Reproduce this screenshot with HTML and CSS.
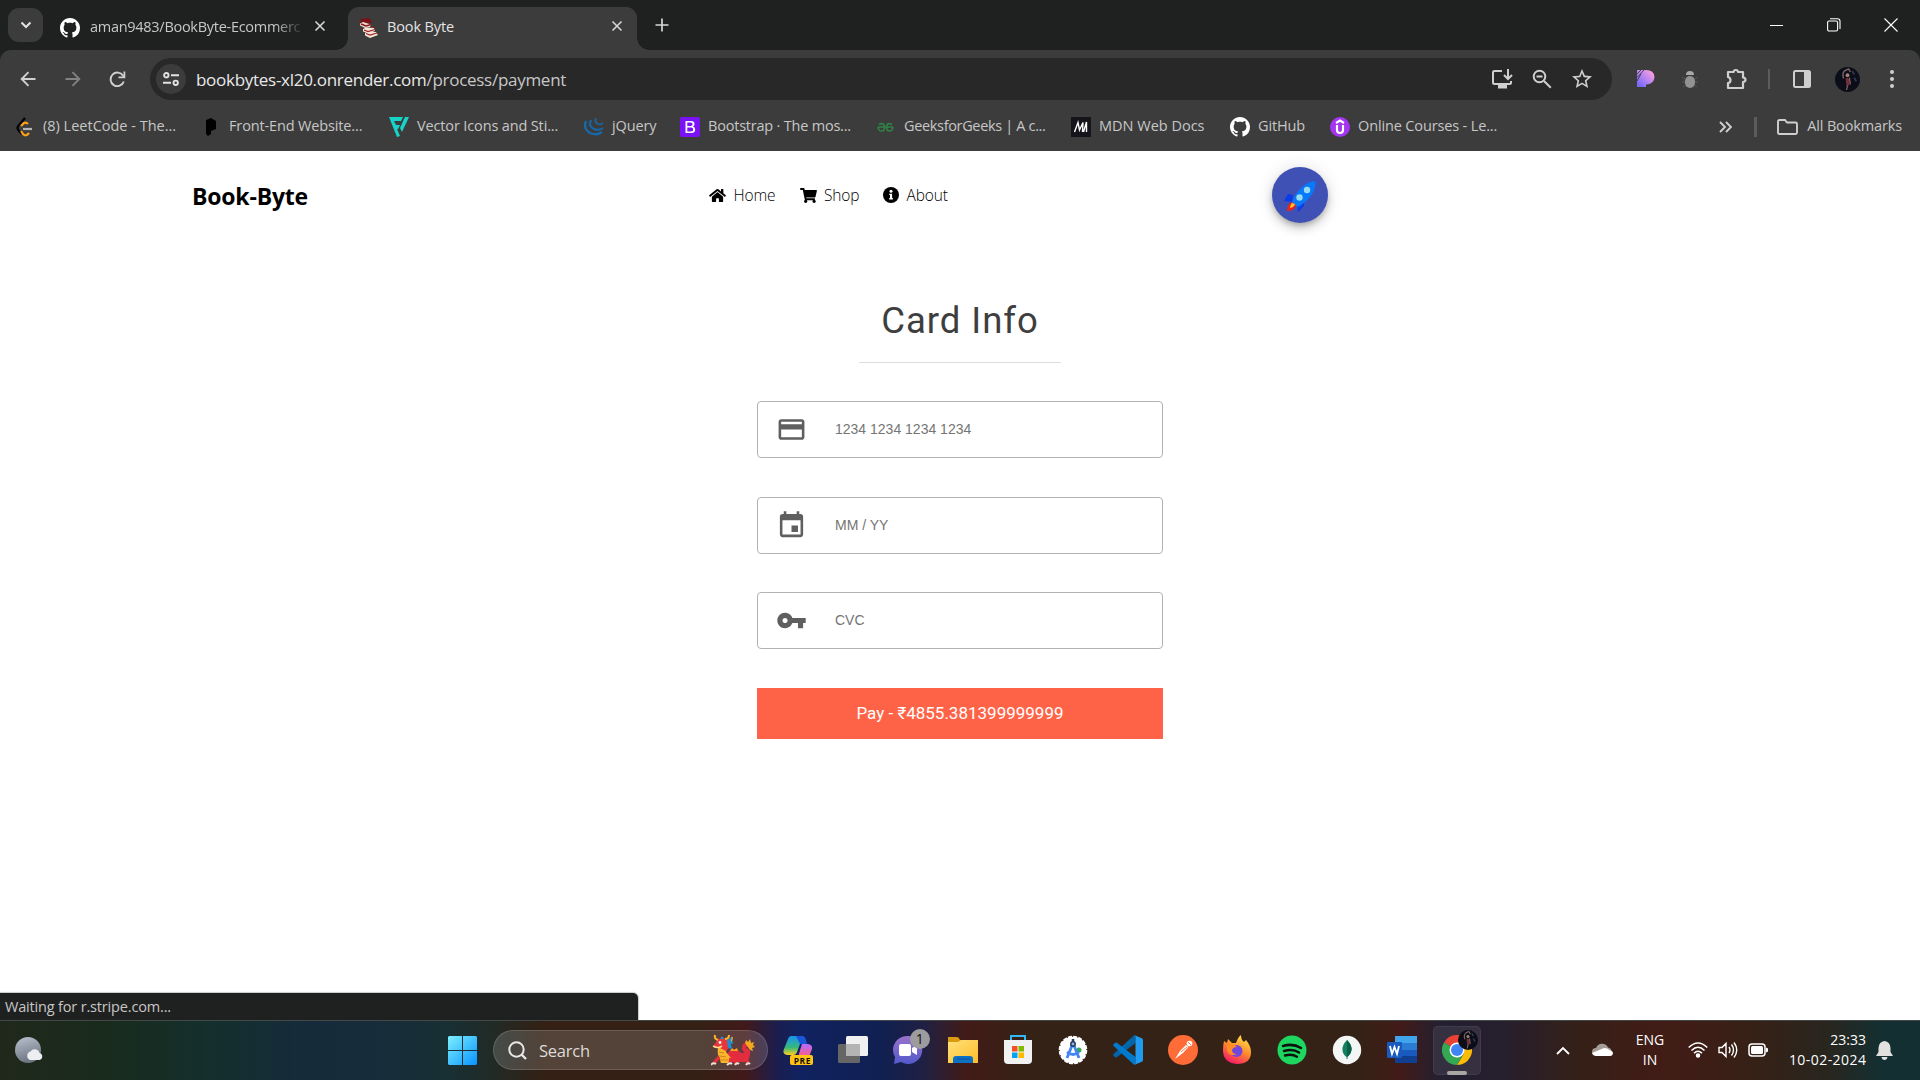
FILE: index.html
```html
<!DOCTYPE html>
<html lang="en">
<head>
<meta charset="utf-8">
<title>Book Byte</title>
<link rel="stylesheet" href="styles.css">
</head>
<body>
<svg class="defs" aria-hidden="true">
  <symbol id="github" viewBox="0 0 16 16"><path d="M8 0C3.58 0 0 3.58 0 8c0 3.54 2.29 6.53 5.47 7.59.4.07.55-.17.55-.38 0-.19-.01-.82-.01-1.49-2.01.37-2.53-.49-2.69-.94-.09-.23-.48-.94-.82-1.13-.28-.15-.68-.52-.01-.53.63-.01 1.08.58 1.23.82.72 1.21 1.87.87 2.33.66.07-.52.28-.87.51-1.07-1.78-.2-3.64-.89-3.64-3.95 0-.87.31-1.59.82-2.15-.08-.2-.36-1.02.08-2.12 0 0 .67-.21 2.2.82.64-.18 1.32-.27 2-.27s1.36.09 2 .27c1.53-1.04 2.2-.82 2.2-.82.44 1.1.16 1.92.08 2.12.51.56.82 1.27.82 2.15 0 3.07-1.87 3.75-3.65 3.95.29.25.54.73.54 1.48 0 1.07-.01 1.93-.01 2.2 0 .21.15.46.55.38A8.01 8.01 0 0 0 16 8c0-4.42-3.58-8-8-8z" fill="#fff"/></symbol>
  <symbol id="close" viewBox="0 0 12 12"><path d="M1.500 1.500l9 9M10.500 1.500l-9 9" stroke="#d6d6d6" stroke-width="1.600"/></symbol>
  <symbol id="avatar" viewBox="0 0 26 26"><circle cx="13" cy="13" r="13" fill="#0b0d18"/><path d="M9 12Q7 7 10 4l4-2 2 3" fill="none" stroke="#7b6560" stroke-width="1.500"/><circle cx="13" cy="8.500" r="2" fill="#a58379"/><path d="M11 12l2-1 2 2v6l-3 1z" fill="#742d3a"/><path d="M13 19l-1 5M15 11l1 7" stroke="#8d6a64" stroke-width="1.200"/><path d="M18 4l2 4M20 11l2 4" stroke="#30364c" stroke-width="2"/></symbol>
</svg>

<header class="browser">
  <div class="tabstrip">
    <button class="tab-search"><svg width="12" height="8" viewBox="0 0 12 8"><path d="M1.500 1.500L6 6l4.500-4.500" fill="none" stroke="#e3e3e3" stroke-width="2"/></svg></button>
    <div class="tab">
      <svg class="ico20"><use href="#github"/></svg>
      <span class="tab-title fade">aman9483/BookByte-Ecommerc</span>
      <svg class="close"><use href="#close"/></svg>
    </div>
    <div class="tab active">
      <svg class="ico20" viewBox="0 0 20 20"><path d="M2 1l8-1 3 4-6 3-6-2z" fill="#7d1118"/><path d="M1 5.500l3-1.500 8 2.500-1 2.500-5 1-5-2.500z" fill="#e9ddc9"/><path d="M2 6l5 2 5-1.500M4 10.500l5 1 6-2.500" fill="none" stroke="#8c1920" stroke-width="1.400"/><path d="M4 11l3-1.500 8 .5 1 3-7 2.500-5-2z" fill="#f0e6d4"/><path d="M5 12l4 1.500 7-2" fill="none" stroke="#a5202a" stroke-width="1.300"/><path d="M6 15l5-1 6 0 2 3-8 3-5-2.500z" fill="#f0e6d4"/><path d="M7 15.500l4 1.500 7-2" fill="none" stroke="#a5202a" stroke-width="1.300"/></svg>
      <span class="tab-title">Book Byte</span>
      <svg class="close"><use href="#close"/></svg>
    </div>
    <button class="new-tab"><svg width="14" height="14" viewBox="0 0 14 14"><path d="M7 .5v13M.5 7h13" stroke="#d6d6d6" stroke-width="1.700"/></svg></button>
    <div class="win-controls">
      <svg width="14" height="14" viewBox="0 0 14 14"><path d="M0 7.500h13" stroke="#fff"/></svg>
      <svg width="14" height="14" viewBox="0 0 14 14"><rect x=".6" y="3" width="10" height="10" rx="1.500" fill="none" stroke="#fff" stroke-width="1.100"/><path d="M3 .7h7.500q2.500 0 2.500 2.500V11" fill="none" stroke="#fff" stroke-width="1.100"/></svg>
      <svg width="14" height="14" viewBox="0 0 14 14"><path d="M.5 .5l13 13M13.500 .5l-13 13" stroke="#fff" stroke-width="1.100"/></svg>
    </div>
  </div>

  <div class="toolbar">
    <div class="nav">
      <svg width="16" height="16" viewBox="0 0 16 16"><path d="M15.500 8H2M8.500 1.200L1.700 8l6.800 6.800" fill="none" stroke="#d0d0d0" stroke-width="1.900"/></svg>
      <svg width="16" height="16" viewBox="0 0 16 16"><path d="M.5 8H14M7.500 1.200L14.300 8l-6.800 6.800" fill="none" stroke="#828282" stroke-width="1.900"/></svg>
      <svg width="17" height="17" viewBox="0 0 17 17"><path d="M14.800 10.500a6.800 6.800 0 1 1-.7-5.800L15 6" fill="none" stroke="#d0d0d0" stroke-width="1.900"/><path d="M16.300 .5v6.800H9.500V5.500h5V.5z" fill="#d0d0d0"/></svg>
    </div>
    <div class="omnibox">
      <span class="site-info"><svg width="16" height="14" viewBox="0 0 16 14" fill="none" stroke="#e3e3e3" stroke-width="1.900"><circle cx="3.300" cy="3.200" r="2.200"/><path d="M8 3.200h8M0 10.800h8"/><circle cx="12.700" cy="10.800" r="2.200"/></svg></span>
      <span class="url"><span class="host">bookbytes-xl20.onrender.com</span><span class="path">/process/payment</span></span>
      <div class="omni-icons">
        <svg width="22" height="20" viewBox="0 0 22 20" fill="none" stroke="#cfcfcf" stroke-width="2"><path d="M11 2H3.500Q2 2 2 3.500v10Q2 15 3.500 15h15q1.500 0 1.500-1.500V12"/><path d="M8 16.500h7v2H8z" fill="#cfcfcf"/><path d="M17 0v9M13 6l4 4 4-4"/></svg>
        <svg width="20" height="20" viewBox="0 0 20 20" fill="none" stroke="#cfcfcf" stroke-width="2"><circle cx="7.500" cy="7.500" r="5.800"/><path d="M12 12l6.800 6.800M4.500 7.500h6"/></svg>
        <svg width="24" height="24" viewBox="0 0 24 24"><path fill="#cfcfcf" d="M22 9.240l-7.190-.62L12 2 9.190 8.630 2 9.240l5.460 4.730L5.820 21 12 17.270 18.180 21l-1.630-7.030L22 9.240zM12 15.400l-3.760 2.270 1-4.280-3.320-2.880 4.380-.38L12 6.100l1.710 4.040 4.380.38-3.320 2.880 1 4.280L12 15.400z"/></svg>
      </div>
    </div>
    <div class="ext">
      <svg width="18" height="20" viewBox="0 0 18 20"><defs><linearGradient id="pg" x1="0" y1="1" x2="1" y2="0"><stop offset=".1" stop-color="#7568ff"/><stop offset=".9" stop-color="#ffa0e0"/></linearGradient></defs><path d="M0 1h9q8 0 8.500 7-.5 7-7.500 7.500H9V18H0z" fill="url(#pg)"/><path d="M0 5l5-5M0 8.500L8 0M0 12L4 5" stroke="#3c3c3c" stroke-width=".9"/></svg>
      <svg width="16" height="20" viewBox="0 0 16 20"><path d="M4 6a4 4 0 0 1 8 0z" fill="#a9a9a9"/><rect x="3" y="7" width="10" height="12" rx="5" fill="#929292"/><path d="M0 8l3 2M16 8l-3 2M0 13h3M13 13h3M1 18l3-2M15 18l-3-2" stroke="#565656"/></svg>
      <svg width="22" height="22" viewBox="0 0 22 22"><path d="M2 4h5.500q.3-2 2.300-2T12 4h5v5.500q2.500.3 2.500 2.300T17 14v6H2v-5q2.500-.3 2.500-2.800T2 9z" fill="none" stroke="#cfcfcf" stroke-width="2.200" stroke-linejoin="round"/></svg>
      <i class="vline"></i>
      <svg width="18" height="18" viewBox="0 0 18 18"><rect x="1" y="1" width="16" height="16" rx="1.500" fill="none" stroke="#cfcfcf" stroke-width="2"/><path d="M11 1h6v16h-6z" fill="#cfcfcf"/></svg>
      <svg width="25" height="25"><use href="#avatar"/></svg>
      <svg width="4" height="18" viewBox="0 0 4 18" fill="#cfcfcf"><circle cx="2" cy="2" r="2"/><circle cx="2" cy="9" r="2"/><circle cx="2" cy="16" r="2"/></svg>
    </div>
  </div>

  <div class="bookmarks">
    <div class="marks">
      <a><svg viewBox="0 0 20 20" fill="none" stroke-width="2.200"><path d="M10 1L4 8q-3 3 0 6l3 3" stroke="#000"/><path d="M6 9l3-3q2-1 4 1M6 14l2 3q3 3 6-1" stroke="#ffa116"/><path d="M8 12h9" stroke="#b3b3b3"/></svg><span>(8) LeetCode - The...</span></a>
      <a><svg viewBox="0 0 20 20"><path d="M5 3l5-2 5 3v8l-5 2v3l-3 2-2-2z" fill="#000"/></svg><span>Front-End Website...</span></a>
      <a><svg viewBox="0 0 20 20"><path d="M0 0h14l-2 4H5l2 4h4l-2 4H8l3 7-3 1z" fill="#16d5c8"/><path d="M16 0h4l-7 15-2-4z" fill="#16d5c8"/></svg><span>Vector Icons and Sti...</span></a>
      <a><svg viewBox="0 0 20 20" fill="none" stroke="#1768a9"><path d="M2 4q-3 8 4 12 7 3 12-1" stroke-width="2.400"/><path d="M7 3q-3 6 3 9 5 2 9-1" stroke-width="2"/><path d="M12 1q-2 4 2 6 3 1 5-1" stroke-width="1.600"/></svg><span>jQuery</span></a>
      <a><svg viewBox="0 0 20 20"><rect width="20" height="20" rx="2" fill="#7a12f8"/><path d="M5.500 4h5.500q3.500 0 3.500 3 0 1.700-1.500 2.500 2.200.6 2.200 3 0 3.500-4 3.500H5.500zM7.300 5.600v3.300h3.300q2 0 2-1.700t-2-1.600zM7.300 10.500v3.900h3.500q2.500 0 2.500-2t-2.500-1.900z" fill="#fff" fill-rule="evenodd"/></svg><span>Bootstrap · The mos...</span></a>
      <a><svg viewBox="0 0 20 20" fill="none" stroke="#2f8045" stroke-width="1.700"><path d="M2 10h15M3 7.500q5-2.500 5.500 2.500 0 4-3 4T2 10M16 7.500q-5-2.500-5.500 2.500 0 4 3 4T17 10"/></svg><span>GeeksforGeeks | A c...</span></a>
      <a><svg viewBox="0 0 20 20"><path d="M0 0h20v20H0z" fill="#15141a"/><path d="M3.500 15L7 5.500 8.500 13 12 5.500 11.500 15M12.500 15L15.500 5v10" fill="none" stroke="#fff" stroke-width="1.400"/></svg><span>MDN Web Docs</span></a>
      <a><svg viewBox="0 0 20 20"><use href="#github"/></svg><span>GitHub</span></a>
      <a><svg viewBox="0 0 20 20"><circle cx="10" cy="10" r="10" fill="#a435f0"/><path d="M6 6l4-2.500L14 6M7 8v5q0 3 3 3t3-3V8" fill="none" stroke="#fff" stroke-width="2.200"/></svg><span>Online Courses - Le...</span></a>
    </div>
    <div class="marks-end">
      <svg width="13" height="12" viewBox="0 0 13 12"><path d="M1 1l5 5-5 5M7 1l5 5-5 5" fill="none" stroke="#cfcfcf" stroke-width="1.900"/></svg>
      <i class="vline thick"></i>
      <svg width="21" height="16" viewBox="0 0 21 16"><path d="M1 2.500Q1 1 2.500 1H8l2 2.500h8.500Q20 3.500 20 5v8.500q0 1.500-1.500 1.500h-16Q1 15 1 13.500z" fill="none" stroke="#cfcfcf" stroke-width="1.900"/></svg>
      <span>All Bookmarks</span>
    </div>
  </div>
</header>

<main class="page">
  <nav class="site-nav">
    <h1 class="brand">Book-Byte</h1>
    <div class="links">
      <a><svg width="17" height="15" viewBox="0 0 576 512"><path d="M280.400 148.300L96 300.100V464a16 16 0 0 0 16 16l112-.3a16 16 0 0 0 16-16V368a16 16 0 0 1 16-16h64a16 16 0 0 1 16 16v95.600a16 16 0 0 0 16 16l112 .4a16 16 0 0 0 16-16V300L295.700 148.300a12.200 12.200 0 0 0-15.300 0zM571.600 251.500L488 182.600V44.100a12 12 0 0 0-12-12h-56a12 12 0 0 0-12 12v72.600L318.500 43a48 48 0 0 0-61 0L4.300 251.500a12 12 0 0 0-1.600 16.900l25.500 31a12 12 0 0 0 16.900 1.600L280.400 107.200a12.200 12.200 0 0 1 15.300 0L531 301a12 12 0 0 0 16.900-1.600l25.500-31a12 12 0 0 0-1.800-16.900z"/></svg><span>Home</span></a>
      <a><svg width="17" height="15" viewBox="0 0 576 512"><path d="M528.100 301.300l47.300-208C578.800 78.300 567.400 64 552 64H159.200l-9.200-44.800C147.800 8 137.900 0 126.500 0H24C10.700 0 0 10.700 0 24v16c0 13.300 10.700 24 24 24h69.900l70.200 343.400C147.300 417.100 136 435.200 136 456c0 30.900 25.100 56 56 56s56-25.100 56-56c0-15.700-6.400-29.800-16.800-40h209.600C430.400 426.200 424 440.300 424 456c0 30.900 25.100 56 56 56s56-25.100 56-56c0-22.200-12.900-41.300-31.600-50.400l5.500-24.300c3.400-15-8-29.300-23.400-29.300H218.100l-6.500-32h293.100c11.200 0 20.900-7.800 23.400-18.700z"/></svg><span>Shop</span></a>
      <a><svg width="16" height="16" viewBox="0 0 16 16"><circle cx="8" cy="8" r="8"/><circle cx="8" cy="4.300" r="1.500" fill="#fff"/><path d="M6.200 6.700h2.900v4.400h.8v1.400H6.200v-1.400H7V8.100h-.8z" fill="#fff"/></svg><span>About</span></a>
    </div>
    <div class="fab">
      <svg width="36" height="36" viewBox="0 0 36 36"><path d="M11 18l-5-1-4 7 8 1zM17 25l5-2 0 6-6 6-1-8z" fill="#0a3cea"/><path d="M10 25Q17 8 31 4q3 0 2.500 4-2 12-15.500 21-3 1.500-6-.5-2.500-1.500-2-3.500z" fill="#0879fb"/><path d="M10 25q-5 2-5 9 8 0 9-6z" fill="#e52620"/><path d="M10 26q-2 2-2 5 4-1 5-4z" fill="#ffc52f"/><circle cx="25" cy="13" r="3.200" fill="#97dbed"/><circle cx="17.500" cy="20.500" r="3.200" fill="#97dbed"/></svg>
    </div>
  </nav>

  <form class="pay">
    <h2>Card Info</h2>
    <div class="field"><svg viewBox="0 0 24 24"><path d="M20 4H4c-1.110 0-1.990.89-1.990 2L2 18c0 1.110.89 2 2 2h16c1.110 0 2-.89 2-2V6c0-1.110-.89-2-2-2zm0 14H4v-6h16v6zm0-10H4V6h16v2z"/></svg><span>1234 1234 1234 1234</span></div>
    <div class="field"><svg viewBox="0 0 24 24"><path d="M17 12h-5v5h5v-5zM16 1v2H8V1H6v2H5c-1.110 0-1.990.9-1.990 2L3 19c0 1.100.89 2 2 2h14c1.100 0 2-.9 2-2V5c0-1.100-.9-2-2-2h-1V1h-2zm3 18H5V8h14v11z"/></svg><span>MM / YY</span></div>
    <div class="field"><svg viewBox="0 0 24 24"><path d="M12.650 10C11.830 7.670 9.610 6 7 6c-3.310 0-6 2.690-6 6s2.690 6 6 6c2.610 0 4.830-1.670 5.650-4H17v4h4v-4h2v-4H12.650zM7 14c-1.100 0-2-.9-2-2s.9-2 2-2 2 .9 2 2-.9 2-2 2z"/></svg><span>CVC</span></div>
    <button type="button" class="submit">Pay - ₹4855.381399999999</button>
  </form>
  <div class="status">Waiting for r.stripe.com...</div>
</main>

<footer class="taskbar">
  <div class="weather"><svg width="29" height="27" viewBox="0 0 29 27"><defs><linearGradient id="mo" x2=".3" y2="1"><stop stop-color="#b9c2cf"/><stop offset="1" stop-color="#6e7783"/></linearGradient></defs><circle cx="13" cy="13" r="13" fill="url(#mo)"/><path d="M15 23a4.500 4.500 0 0 1 .5-8.500 5 5 0 0 1 9 1.500 3.600 3.600 0 0 1 0 7z" fill="#eceef2"/></svg></div>
  <div class="apps">
    <div class="app start"><svg width="29" height="29" viewBox="0 0 29 29"><defs><linearGradient id="wi" x2="1" y2="1"><stop stop-color="#7df0ff"/><stop offset="1" stop-color="#0893ff"/></linearGradient></defs><path d="M1 0h13v14H0V1zM15 0h13l1 1v13H15zM0 15h14v14H1l-1-1zM15 15h14v13l-1 1H15z" fill="url(#wi)"/></svg></div>
    <div class="search">
      <svg width="19" height="19" viewBox="0 0 19 19"><circle cx="8.500" cy="8.500" r="7.200" fill="none" stroke="#e8e8e8" stroke-width="2"/><path d="M13.500 13.500l4.500 4.500" stroke="#e8e8e8" stroke-width="2.400"/></svg>
      <span>Search</span>
      <svg class="dragon" width="44" height="32" viewBox="0 0 44 32"><path d="M16 20q6-8 12-3 4 4 5 1-4-3-1-8 4-3 7 0l-1 3q-3-1-3 1 5 1 4 7-1 8-8 7H16z" fill="#e22c40"/><path d="M34 9l1-3 2 2 2-3 1 4 3-1-1 3 2 2-3 1 1 3-3-1M19 17l2-3 2 2 3-2 1 3" fill="#f6a71c"/><path d="M7 14q-1 6 1 9l2 6h9l1-5-5-6 1-6z" fill="#f9b52c"/><path d="M8 18l5 1M8 22l7 1M9 26l8 0" stroke="#d98218"/><path d="M3 11l4-6 7-1 4 4 1 5-4 4-6-3-6 0z" fill="#e6353b"/><path d="M7 6Q3 5 4 1M14 5q4 0 4-4M20 8l1-5" fill="none" stroke="#ffb526" stroke-width="2"/><path d="M16 6l5-3-1 4 3 2-3 1 1 5-4-1zM9 5l2-3 2 3z" fill="#208dce"/><circle cx="9" cy="8.500" r="1.400" fill="#fff"/><path d="M2 12q5 3 9 0" fill="none" stroke="#ffd88a" stroke-width="1.600"/><path d="M8 23l-5 6M24 22l1 8M20 24l-1 6M34 23l3 6" stroke="#e72d3b" stroke-width="3.500"/><path d="M0 31q2-3 5-1M16 31q3-3 5-1M24 31q2-3 4-1M35 31q2-3 4-1" stroke="#eee3d8" stroke-width="2" fill="none"/></svg>
    </div>
    <div class="app"><svg width="30" height="30" viewBox="0 0 30 30"><defs><linearGradient id="c1" x2="0" y2="1"><stop stop-color="#1794f0"/><stop offset=".6" stop-color="#35b97c"/><stop offset="1" stop-color="#ffd21c"/></linearGradient><linearGradient id="c2" x2="0" y2="1"><stop stop-color="#b66aff"/><stop offset="1" stop-color="#ff5c7d"/></linearGradient></defs><path d="M8 1h12l-6 16q-1 3-4 3H4q-5-1-3-6L5 4q1-3 3-3z" fill="url(#c1)"/><path d="M13 1h6q3 0 4 4l1 4h-7z" fill="#1b55d9"/><path d="M19 9h6q5 1 4 5l-3 8H15z" fill="url(#c2)"/><rect x="7" y="20" width="23" height="10" rx="2" fill="#ffc414"/></svg><b class="pre">PRE</b></div>
    <div class="app"><svg width="30" height="28" viewBox="0 0 30 28"><rect y="8" width="22" height="19" rx="1.500" fill="#666"/><rect x="8" width="22" height="20" rx="1.500" fill="#f1f1f1"/><path d="M8 8h14v12H8z" fill="#b4b4b4"/></svg></div>
    <div class="app"><svg width="30" height="30" viewBox="0 0 30 30"><defs><linearGradient id="ch" x2="0" y2="1"><stop stop-color="#9a72cb"/><stop offset="1" stop-color="#5159cb"/></linearGradient></defs><path d="M15 1a14 14 0 1 1-7 26l-7 2 1-7A14 14 0 0 1 15 1z" fill="url(#ch)"/><rect x="6" y="9" width="12" height="12" rx="2" fill="#fff"/><path d="M19 13l5-3v10l-5-3z" fill="#fff"/></svg><b class="count">1</b></div>
    <div class="app"><svg width="30" height="28" viewBox="0 0 30 28"><defs><linearGradient id="fo" x2="1" y2="1"><stop stop-color="#ffe17b"/><stop offset="1" stop-color="#ffbd29"/></linearGradient></defs><path d="M0 8V1h9q2 0 3 3h5v4z" fill="#d99b11"/><path d="M0 6h10l3-2h17v23H0z" fill="url(#fo)"/><path d="M5 27v-4q0-3 3-3h14q3 0 3 3v4z" fill="#0e70c5"/><path d="M9 23h13" stroke="#084e91"/></svg></div>
    <div class="app"><svg width="30" height="30" viewBox="0 0 30 30"><path d="M8 7V1h14v6" fill="none" stroke="#2fb8f4" stroke-width="2"/><path d="M1 5h28v20q0 4-4 4H5q-4 0-4-4z" fill="#f1f1f1"/><path d="M9 11h5.500v5.500H9z" fill="#f25022"/><path d="M15.500 11H21v5.500h-5.500z" fill="#7fba00"/><path d="M9 17.500h5.500V23H9z" fill="#00a4ef"/><path d="M15.500 17.500H21V23h-5.500z" fill="#ffb900"/></svg></div>
    <div class="app"><svg width="30" height="30" viewBox="0 0 30 30"><circle cx="15" cy="15" r="13.300" fill="#fff" stroke="#fff" stroke-width="2" stroke-dasharray="4 1.200"/><circle cx="21" cy="15" r="2.500" fill="#34a853"/><path d="M15 8L9 23M15 8l6 15M9 17q6 5 12 0" fill="none" stroke="#4285f4" stroke-width="2.800"/><circle cx="15" cy="9" r="2.200" fill="#8fb4e8" stroke="#233b59" stroke-width="1.500"/><path d="M15 4v3" stroke="#233b59" stroke-width="2.500"/></svg></div>
    <div class="app"><svg width="30" height="30" viewBox="0 0 100 100"><path d="M75 27L13 74q-3 2-5 0l-6-5q-3-3 0-6L70 1l5 2z" fill="#0065a9"/><path d="M75 73L13 26q-3-2-5 0l-6 5q-3 3 0 6l68 62 5-2z" fill="#007acc"/><path d="M70 0l26 11q4 2 4 6v66q0 4-4 6L70 100q4-2 5-6V6q-1-4-5-6z" fill="#1f9cf0"/></svg></div>
    <div class="app"><svg width="30" height="30" viewBox="0 0 30 30"><circle cx="15" cy="15" r="15" fill="#ff6c37"/><path d="M7 24l5-8 6-6 2.500 2-5.500 6z" fill="#fff"/><circle cx="21.500" cy="8.500" r="2.800" fill="#fff"/><path d="M13 17l6-5M20 7l3 3" stroke="#ff6c37" stroke-width=".9"/></svg></div>
    <div class="app"><svg width="30" height="30" viewBox="0 0 30 30"><defs><linearGradient id="ff" x1=".8" y1="0" x2=".3" y2="1"><stop stop-color="#ffe94c"/><stop offset=".5" stop-color="#ff8a2b"/><stop offset="1" stop-color="#f5156c"/></linearGradient></defs><path d="M2 6l3 2 1-4 4 4h4q2-6 5-8 0 5 3 7l2-2q5 6 5 12 0 12-14 12Q1 28 1 15q0-5 1-9z" fill="url(#ff)"/><circle cx="14.500" cy="16" r="6" fill="#7146df"/><path d="M5 10q7-2 10 2-4 0-5 3 0 4 5 4-8 3-10-4z" fill="#ff8d24"/></svg></div>
    <div class="app"><svg width="30" height="30" viewBox="0 0 30 30"><circle cx="15" cy="15" r="14.500" fill="#1ed760"/><path d="M6 11q10-3 18 2M7 16q9-2.500 15 1.500M8 20.500q7-2 12 1.200" fill="none" stroke="#0b130c" stroke-width="2.500" stroke-linecap="round"/></svg></div>
    <div class="app"><svg width="30" height="30" viewBox="0 0 30 30"><circle cx="15" cy="15" r="14.200" fill="#f4f5f5"/><path d="M15 5q5 5 4.500 10-.5 4-4 7v2h-1v-2q-4-3-4-7Q10 10 15 5z" fill="#13805e"/><path d="M15 5q5 5 4.500 10-.5 4-4.500 7z" fill="#0a5f47"/></svg></div>
    <div class="app"><svg width="30" height="28" viewBox="0 0 30 28"><path d="M8 0h22v8H8z" fill="#41a5ee"/><path d="M8 7h22v7H8z" fill="#2b7cd3"/><path d="M8 14h22v7H8z" fill="#185abd"/><path d="M8 20h22v7H8z" fill="#103f91"/><rect y="6" width="15" height="16" rx="1" fill="#185abd"/><path d="M3 10l2 8 2.500-7L10 18l2-8" fill="none" stroke="#fff" stroke-width="1.800"/></svg></div>
    <div class="app current"><svg width="30" height="30" viewBox="0 0 30 30"><path d="M15 15L2 7.500A15 15 0 0 1 28 7.500z" fill="#ea4335"/><path d="M28 7.500A15 15 0 0 1 15 30l6.500-11V7.500z" fill="#fbbc05"/><path d="M2 7.500A15 15 0 0 0 15 30l6.500-11.200L15 15z" fill="#34a853"/><circle cx="15" cy="15" r="7.500" fill="#fff"/><circle cx="15" cy="15" r="6" fill="#3f86f4"/></svg><svg class="mini"><use href="#avatar"/></svg></div>
  </div>
  <div class="tray">
    <svg width="14" height="9" viewBox="0 0 14 9"><path d="M1 8l6-6 6 6" fill="none" stroke="#fff" stroke-width="1.800"/></svg>
    <svg width="21" height="14" viewBox="0 0 21 14"><path d="M4 13a4 4 0 0 1 0-8 6.500 6.500 0 0 1 12-.5A4.500 4.500 0 0 1 17 13z" fill="#a49c98"/><path d="M4 13q-3-.5-4-3l12-5q4 0 5 2 4 .5 4 3.500-.5 2.500-3 2.500z" fill="#fff"/></svg>
    <div class="lang"><span>ENG</span><span>IN</span></div>
    <svg width="20" height="16" viewBox="0 0 20 16" fill="none" stroke="#fff" stroke-width="1.500"><path d="M.7 5.500q9.300-9 18.600 0M3.500 8.500q6.500-6.500 13 0M6 11.300q4-4 8 0"/><circle cx="10" cy="13.500" r="1.500" fill="#fff"/></svg>
    <svg width="20" height="18" viewBox="0 0 20 18" fill="none" stroke="#fff" stroke-width="1.400"><path d="M1 6.500h3L8 2.500v13l-4-4H1zM11 6q2 3 0 6M13.500 3.500q4 5.500 0 11M16 1.500q5.500 7.500 0 15"/></svg>
    <svg width="20" height="14" viewBox="0 0 20 14"><rect x="1" y="1" width="16" height="12" rx="3" fill="none" stroke="#fff" stroke-width="1.500"/><rect x="3" y="3" width="12" height="8" rx="1.500" fill="#fff"/><path d="M18 4.500l2 1v3l-2 1z" fill="#fff"/></svg>
    <div class="clock"><span>23:33</span><span class="date">10-02-2024</span></div>
    <svg width="17" height="19" viewBox="0 0 17 19" fill="#e3e1df"><path d="M8.500 0Q14 .5 14.500 7v4l2.500 4H0l2.500-4V7Q3 .5 8.500 0zM5.500 16h6q-.5 3-3 3t-3-3z"/></svg>
  </div>
</footer>
</body>
</html>
```
FILE: styles.css
```css
* { box-sizing: border-box; }
body {
  margin: 0;
  width: 1920px;
  height: 1080px;
  overflow: hidden;
  display: flex;
  flex-direction: column;
  background: #fff;
  font-family: "Open Sans", "Noto Sans", sans-serif;
}
button { border: 0; padding: 0; font: inherit; }
svg { display: block; flex: none; }
.defs { position: absolute; width: 0; height: 0; }

/* Browser chrome */
.browser { height: 151px; background: #1f2120; color: #c7c7c7; font-size: 14.500px; }
.tabstrip { height: 50px; display: flex; align-items: flex-end; }
.tab-search {
  width: 35px; height: 34px; margin: 0 9px 8px 8px;
  border-radius: 11px; background: #3c3c3c;
  display: grid; place-items: center;
}
.tab { width: 296px; height: 43px; padding: 0 22px 2px 8px; display: flex; align-items: center; }
.ico20 { width: 20px; height: 20px; }
.tab-title { margin: 0 0 3px 10px; white-space: nowrap; letter-spacing: -.13px; }
.fade {
  letter-spacing: -.28px;
  -webkit-mask-image: linear-gradient(90deg, #000 88%, rgba(0,0,0,.15));
  mask-image: linear-gradient(90deg, #000 88%, rgba(0,0,0,.15));
}
.close { width: 12px; height: 12px; margin: 0 0 3px auto; }
.tab.active {
  position: relative; width: 289px; padding: 0 14px 2px 11px;
  background: #3c3c3c; color: #e3e3e3; border-radius: 11px 11px 0 0;
}
.tab.active .tab-title { margin-left: 8px; }
.tab.active::before, .tab.active::after {
  content: ""; position: absolute; bottom: 0; width: 12px; height: 12px;
}
.tab.active::before { left: -12px; background: radial-gradient(circle at 0 0, transparent 11.500px, #3c3c3c 12px); }
.tab.active::after { right: -12px; background: radial-gradient(circle at 100% 0, transparent 11.500px, #3c3c3c 12px); }
.new-tab { background: none; margin: 0 0 18px 18px; }
.win-controls { display: flex; gap: 43px; margin: 0 22px 18px auto; }

.toolbar {
  height: 54px; padding-top: 8px; display: flex; align-items: flex-start;
  background: #3c3c3c; border-radius: 11px 11px 0 0;
}
.nav { width: 150px; height: 42px; padding-left: 20px; display: flex; align-items: center; gap: 28.500px; }
.omnibox {
  width: 1462px; height: 42px; padding: 0 18px 0 6px; border-radius: 21px;
  background: #282828; display: flex; align-items: center;
}
.site-info { width: 30px; height: 30px; border-radius: 50%; background: #3c3c3c; display: grid; place-items: center; }
.url { margin-left: 10px; font-size: 17px; letter-spacing: -.28px; white-space: nowrap; }
.host { color: #e8e8e8; }
.path { color: #c7c7c7; }
.omni-icons { margin-left: auto; display: flex; align-items: center; gap: 18.500px; }
.ext { height: 42px; flex: 1; display: flex; align-items: center; padding-left: 25px; }
.ext > :nth-child(2) { margin-left: 27px; }
.ext > :nth-child(3) { margin-left: 28px; }
.ext > :nth-child(4) { margin-left: 20px; }
.ext > :nth-child(5) { margin-left: 23px; }
.ext > :nth-child(6) { margin-left: 24px; }
.ext > :nth-child(7) { margin-left: 30px; }
.vline { width: 2px; height: 20px; background: #5c5c5c; }
.vline.thick { width: 3px; }

.bookmarks {
  height: 47px; padding: 0 18px 2px 15px; background: #3c3c3c; letter-spacing: -.14px;
  display: flex; justify-content: space-between; align-items: center; white-space: nowrap;
}
.bookmarks span { margin-bottom: 2px; }
.marks { display: grid; grid-template-columns: 186px 188px 195px 96px 196px 195px 159px 100px 180px; }
.marks a { display: flex; align-items: center; gap: 8px; }
.marks a svg { width: 20px; height: 20px; }
.marks a:nth-child(1), .marks a:nth-child(7) { letter-spacing: 0; }
.marks a:nth-child(5) { letter-spacing: -.21px; }
.marks a:nth-child(6) { letter-spacing: -.34px; }
.marks-end { display: flex; align-items: center; }
.marks-end .vline { margin: 0 20px 0 22px; }
.marks-end span { margin-left: 9px; }

/* Web page */
.page { height: 869px; position: relative; background: #fff; }
.site-nav { height: 88px; padding-left: 192px; display: flex; align-items: center; color: #000; }
.brand { width: 517px; margin: 2px 0 0; font-size: 23px; font-weight: 700; letter-spacing: -.19px; }
.links { width: 563px; display: flex; gap: 23px; font-size: 15.500px; font-weight: 300; letter-spacing: -.12px; }
.links a { display: flex; align-items: center; gap: 7.500px; }
.links a:nth-child(1) span { width: 43px; }
.links a:nth-child(2) span { width: 36px; }
.fab {
  width: 56px; height: 56px; border-radius: 50%; background: #3f51b5;
  display: grid; place-items: center;
  box-shadow: 0 3px 5px -1px rgba(0,0,0,.2), 0 6px 10px rgba(0,0,0,.14), 0 1px 18px rgba(0,0,0,.12);
}

.pay { width: 406px; margin: 51px auto 0; display: flex; flex-direction: column; font-family: Roboto, sans-serif; }
.pay h2 {
  width: 202px; height: 73px; margin: 0 auto 38px; line-height: 61px; text-align: center; white-space: nowrap;
  font-size: 36.500px; font-weight: 400; letter-spacing: .95px; color: #3e3e3e; border-bottom: 1px solid #dcdcdc;
}
.field {
  height: 57px; margin-bottom: 39px; padding-left: 18px; border: 1px solid #b3b3b3; border-radius: 4px;
  display: flex; align-items: center; gap: 28px;
  font: 14px "Liberation Sans", sans-serif; color: #757575;
}
.field:nth-child(3) { margin-bottom: 38px; }
.field span { margin-bottom: 2px; }
.field svg { width: 31px; height: 31px; fill: #5f5f5f; }
.submit { height: 51px; padding-bottom: 1px; background: #ff6347; color: #fff; font-size: 17px; font-weight: 400; }
.status {
  position: absolute; left: 0; bottom: 0; width: 638px; height: 27px; padding-left: 5px;
  display: flex; align-items: center; background: #1f2120; color: #c7c7c7; font-size: 14.500px; letter-spacing: -.17px;
  border-radius: 0 5px 0 0; box-shadow: 0 0 1px 1px #c9c9c9;
}

/* Desktop taskbar */
.taskbar {
  position: relative;
  height: 60px; border-top: 1px solid #434947; padding-bottom: 1px; display: flex; align-items: center; color: #fff;
  background: linear-gradient(90deg, #1f281b 0, #192b1d 110px, #142f2b 200px, #152b3b 310px, #162c3b 370px, #182f33 450px, #202b27 490px, #342014 545px, #342014 700px, #42191a 745px, #1a1e50 778px, #102260 800px, #102052 880px, #202042 925px, #421b17 965px, #352216 1030px, #352216 1360px, #421b18 1400px, #241f31 1440px, #251f2e 1500px, #352018 1580px, #421c16 1665px, #352117 1760px, #28261f 1830px, #142f32 1880px, #142f32 1920px);
}
.weather { width: 435px; padding-left: 15px; }
.apps { display: flex; align-items: center; height: 100%; }
.app { position: relative; width: 54.900px; height: 49px; display: grid; place-items: center; }
.search {
  width: 275px; height: 40px; margin: 0 3px; padding: 0 12px 0 14px; border-radius: 20px;
  border: 1px solid rgba(255,255,255,.14); background: rgba(255,255,255,.155);
  display: flex; align-items: center; font-size: 16.500px; letter-spacing: -.21px; color: #dedbd8;
}
.search span { margin-left: 12px; }
.dragon { margin-left: auto; }
.pre { position: absolute; left: 20px; top: 30px; width: 23px; text-align: center; font: 700 8.500px/9px "Open Sans", sans-serif; letter-spacing: .6px; color: #111; }
.count { position: absolute; left: 29px; top: 3px; width: 20px; height: 20px; border-radius: 50%; background: #9c9c9e; color: #111; font-size: 14px; font-weight: 400; line-height: 20px; text-align: center; }
.app.current::before { content: ""; position: absolute; inset: 0 3px; border-radius: 5px; background: rgba(255,255,255,.08); border: 1px solid rgba(255,255,255,.06); }
.app.current::after { content: ""; position: absolute; left: 17px; bottom: 0; width: 20px; height: 4px; border-radius: 2px; background: #a9a6a6; }
.app.current svg { position: relative; }
.app.current .mini { position: absolute; left: 28px; top: 4px; width: 20px; height: 20px; }
.tray { display: flex; align-items: center; margin-left: auto; padding-right: 27px; font-size: 14px; }
.tray > svg { margin-left: 10px; }
.tray > svg:nth-child(2) { margin-left: 22px; }
.lang, .clock { display: flex; flex-direction: column; line-height: 20px; }
.lang { width: 30px; align-items: center; margin: 0 13px 0 22px; }
.clock { width: 80px; align-items: flex-end; margin: 0 0 0 18px; }
.date { letter-spacing: .45px; margin-right: -.45px; }
```
